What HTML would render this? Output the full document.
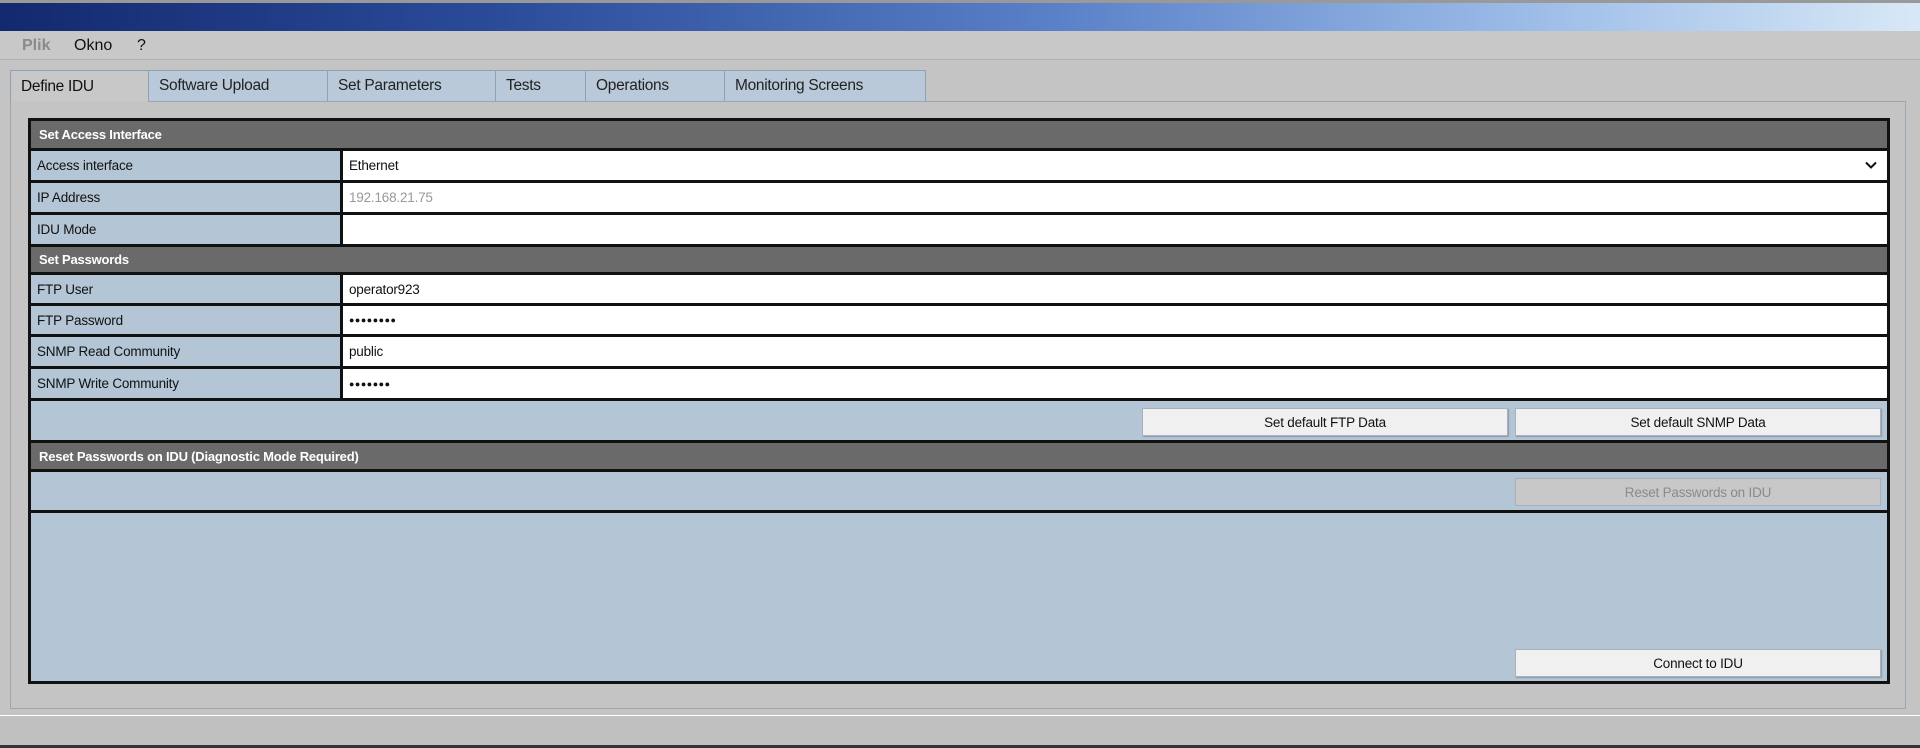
<!DOCTYPE html>
<html><head><meta charset="utf-8"><style>
body{margin:0;width:1920px;height:748px;background:#c4c4c4;position:relative;overflow:hidden;font-family:"Liberation Sans",sans-serif;font-size:14px;color:#111}
div{position:absolute;box-sizing:border-box}
.h{background:#6a6a6a;color:#fff;font-weight:bold;font-size:13px;padding-left:8px;display:flex;align-items:center;left:31px;width:1856px;letter-spacing:-0.2px}
.l{background:#b4c5d5;left:31px;width:309px;padding-left:6px;display:flex;align-items:center;font-size:13.5px;letter-spacing:-0.2px}
.v{background:#fff;left:343px;width:1544px;padding-left:6px;display:flex;align-items:center;font-size:13.5px;letter-spacing:-0.2px}
.b{background:#f0f0f0;border:1px solid #a8b0bc;box-shadow:1px 1px 1px #8898a8;display:flex;align-items:center;justify-content:center;font-size:13.5px;height:28px;letter-spacing:-0.2px}
.t{top:70px;height:32px;background:#b9c9d9;border:1px solid #8fa1b3;display:flex;align-items:center;padding-left:10px;font-size:15.5px;color:#222;letter-spacing:-0.3px}
</style></head><body>
<div style="left:0;top:0;width:1920px;height:3px;background:#999"></div>
<div style="left:0;top:3px;width:1920px;height:28px;background:linear-gradient(90deg,#13296e 0%,#2a4a98 25%,#5a80c8 55%,#9dbde8 80%,#d8e8f6 100%)"></div>
<div style="left:0;top:31px;width:1920px;height:29px;background:#c8c8c8;border-bottom:1px solid #b0b0b0;font-size:16px">
<span style="position:absolute;left:22px;top:6px;color:#8a8a8a;font-weight:bold">Plik</span>
<span style="position:absolute;left:74px;top:6px">Okno</span>
<span style="position:absolute;left:137px;top:6px">?</span></div>
<div class="t" style="left:10px;width:139px;background:#c8c8c8;border-bottom:none;height:33px;color:#111">Define IDU</div>
<div class="t" style="left:148px;width:180px">Software Upload</div>
<div class="t" style="left:327px;width:169px">Set Parameters</div>
<div class="t" style="left:495px;width:91px">Tests</div>
<div class="t" style="left:585px;width:140px">Operations</div>
<div class="t" style="left:724px;width:202px">Monitoring Screens</div>
<div style="left:10px;top:101px;width:1896px;height:608px;border:1px solid #9aa6b2;border-top:none;background:#c4c4c4"></div>
<div style="left:148px;top:101px;width:1758px;height:1px;background:#9aa6b2"></div>
<div style="left:28px;top:118px;width:1862px;height:566px;background:#111"></div>
<div class="h" style="top:121px;height:27px">Set Access Interface</div>
<div class="l" style="top:151px;height:29px">Access interface</div>
<div class="v" style="top:151px;height:29px">Ethernet<svg style="position:absolute;right:10px;top:10px" width="12" height="8" viewBox="0 0 12 8"><path d="M1 1.5L6 6.5L11 1.5" fill="none" stroke="#111" stroke-width="2"/></svg></div>
<div class="l" style="top:183px;height:29px">IP Address</div>
<div class="v" style="top:183px;height:29px;color:#999">192.168.21.75</div>
<div class="l" style="top:215px;height:29px">IDU Mode</div>
<div class="v" style="top:215px;height:29px"></div>
<div class="h" style="top:247px;height:25px">Set Passwords</div>
<div class="l" style="top:275px;height:28px">FTP User</div>
<div class="v" style="top:275px;height:28px">operator923</div>
<div class="l" style="top:306px;height:28px">FTP Password</div>
<div class="v" style="top:306px;height:28px;font-size:9px;letter-spacing:0.5px">&#9679;&#9679;&#9679;&#9679;&#9679;&#9679;&#9679;&#9679;</div>
<div class="l" style="top:337px;height:29px">SNMP Read Community</div>
<div class="v" style="top:337px;height:29px">public</div>
<div class="l" style="top:369px;height:29px">SNMP Write Community</div>
<div class="v" style="top:369px;height:29px;font-size:9px;letter-spacing:0.5px">&#9679;&#9679;&#9679;&#9679;&#9679;&#9679;&#9679;</div>
<div style="left:31px;top:401px;width:1856px;height:39px;background:#b4c5d5"></div>
<div class="b" style="left:1142px;top:408px;width:366px">Set default FTP Data</div>
<div class="b" style="left:1515px;top:408px;width:366px">Set default SNMP Data</div>
<div class="h" style="top:443px;height:26px">Reset Passwords on IDU (Diagnostic Mode Required)</div>
<div style="left:31px;top:472px;width:1856px;height:38px;background:#b4c5d5"></div>
<div class="b" style="left:1515px;top:478px;width:366px;background:#c8c8c8;color:#8a8a8a;box-shadow:none">Reset Passwords on IDU</div>
<div style="left:31px;top:513px;width:1856px;height:168px;background:#b4c5d5"></div>
<div class="b" style="left:1515px;top:649px;width:366px">Connect to IDU</div>
<div style="left:0;top:715px;width:1920px;height:1px;background:#fff"></div>
<div style="left:0;top:716px;width:1920px;height:29px;background:#c0c0c0"></div>
<div style="left:0;top:745px;width:1920px;height:3px;background:#333"></div>
</body></html>
